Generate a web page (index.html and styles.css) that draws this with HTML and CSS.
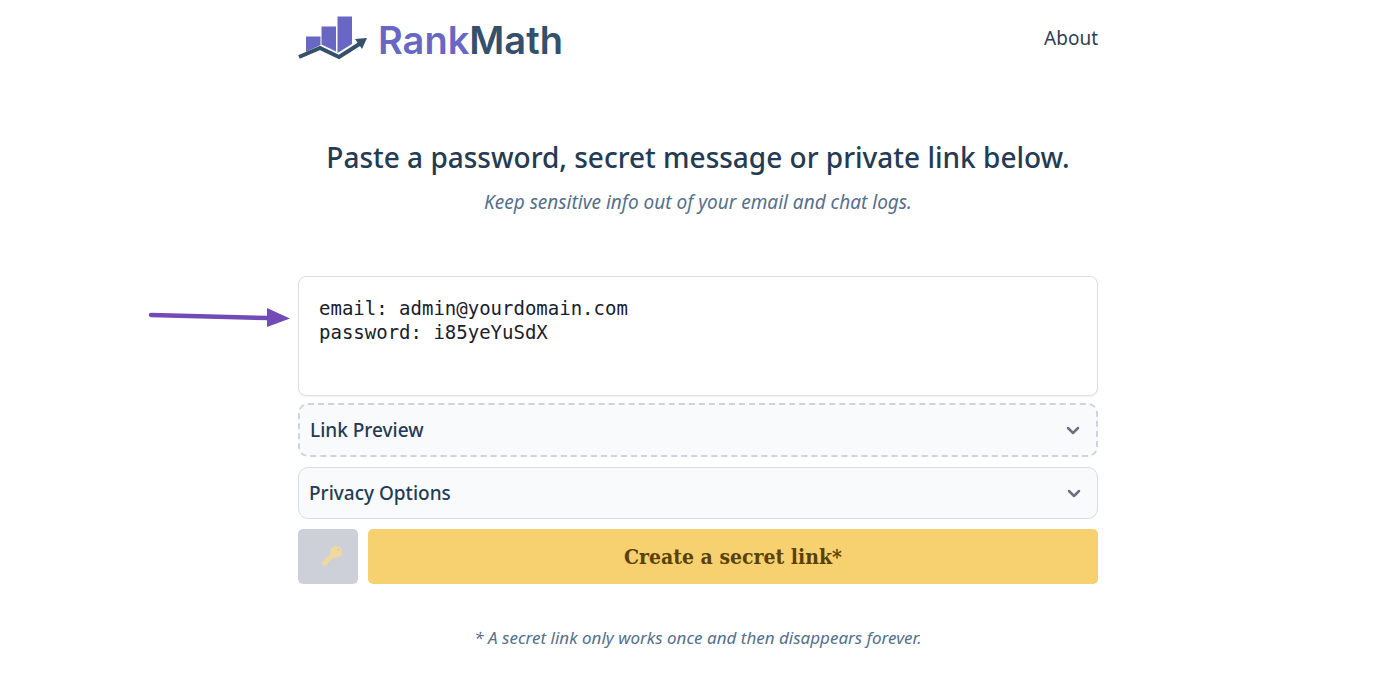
FILE: index.html
```html
<!DOCTYPE html>
<html lang="en">
<head>
    <meta charset="UTF-8">
    <meta name="viewport" content="width=device-width, initial-scale=1.0">
    <title>RankMath - Share a secret link</title>
    <link rel="stylesheet" href="styles.css">
</head>
<body>
    <div class="container">
        <!-- Header -->
        <header class="header">
            <a class="logo" href="#">
                <svg class="logo-mark" viewBox="0 0 70 44" aria-hidden="true">
                    <path fill="#6868c4" d="M8 20.500h14.500v8.500L8 36zM23.500 10.500h14.500v25L23.500 28.500zM39.500 .5h14.500v27.500L39.500 37z"/>
                    <path fill="none" stroke="#35506a" stroke-width="4" d="M1 41 22 32 41 41 63 27"/>
                    <path fill="#35506a" d="M57 23 69 22 64 33z"/>
                </svg>
                <span class="logo-text">Rank<span class="logo-dark">Math</span></span>
            </a>
            <nav>
                <a class="nav-link" href="#">About</a>
            </nav>
        </header>

        <main>
            <h1>Paste a password, secret message or private link below.</h1>
            <p class="subtitle">Keep sensitive info out of your email and chat logs.</p>

            <!-- Secret Form -->
            <form class="secret-form">
                <div class="secret-box">
                    <textarea id="secret" aria-label="Secret message" spellcheck="false">email: admin@yourdomain.com
password: i85yeYuSdX</textarea>
                    <svg class="arrow" viewBox="0 0 142 20" aria-hidden="true">
                        <path fill="none" stroke="#724bb7" stroke-width="4.5" stroke-linecap="round" d="M3 7 120 10"/>
                        <path fill="#724bb7" d="M119 0 142 10.500 119 19z"/>
                    </svg>
                </div>

                <details class="panel panel-dashed">
                    <summary>Link Preview
                        <svg class="chevron" viewBox="0 0 14 10" aria-hidden="true"><path d="M2 3l5 5 5-5"/></svg>
                    </summary>
                </details>

                <details class="panel">
                    <summary>Privacy Options
                        <svg class="chevron" viewBox="0 0 14 10" aria-hidden="true"><path d="M2 3l5 5 5-5"/></svg>
                    </summary>
                </details>

                <div class="actions">
                    <button type="button" class="key-button" aria-label="Encrypt with a password">
                        <svg class="key" viewBox="0 0 20 20" aria-hidden="true">
                            <path fill="#f1d99c" fill-rule="evenodd" d="M14.500 0a5.500 5.500 0 0 1 0 11.500q-1.500 0-2.500-.3L10.500 13l-1.500.8-4.500 4.800a2 2 0 0 1-4-2.800L8.500 8.500Q8 7.500 8 6a6 6 0 0 1 6.500-6zM16.300 2.200a1.300 1.300 0 1 0 0 2.600 1.300 1.300 0 0 0 0-2.600z"/>
                        </svg>
                    </button>
                    <button type="submit" class="create-button">Create a secret link*</button>
                </div>
            </form>
        </main>

        <footer class="footer">
            <p>* A secret link only works once and then disappears forever.</p>
        </footer>
    </div>
</body>
</html>
```
FILE: styles.css
```css
* {
    box-sizing: border-box;
}

body {
    margin: 0;
    padding: 0 20px 0 16px;
    background-color: #fff;
    font-family: "Noto Sans", "Open Sans", sans-serif;
    color: #243b53;
}

.container {
    max-width: 800px;
    margin: 0 auto;
}

/* Header */
.header {
    display: flex;
    justify-content: space-between;
    align-items: center;
    height: 76px;
}

.logo {
    display: flex;
    align-items: center;
    gap: 10px;
    text-decoration: none;
}

.logo-mark {
    width: 70px;
    height: 44px;
}

.logo-text {
    padding-top: 4px;
    font-family: Inter, sans-serif;
    font-size: 38px;
    font-weight: 600;
    line-height: 44px;
    color: #6868c4;
}

.logo-dark {
    color: #35506a;
}

.nav-link {
    font-size: 19px;
    color: #32404e;
    text-decoration: none;
}

/* Headings */
h1 {
    margin: 61px 0 0;
    font-size: 28px;
    font-weight: 550;
    line-height: 40px;
    text-align: center;
}

.subtitle {
    margin: 11px 0 60px;
    font-size: 19px;
    font-style: italic;
    line-height: 28px;
    text-align: center;
    color: #54708c;
}

/* Secret form */
.secret-box {
    position: relative;
}

textarea {
    display: block;
    width: 100%;
    height: 120px;
    padding: 19px 20px;
    border: 1px solid #dcdfe4;
    border-radius: 8px;
    box-shadow: 0 1px 2px rgba(0, 0, 0, 0.06);
    font-family: "DejaVu Sans Mono", monospace;
    font-size: 19px;
    line-height: 24px;
    color: #1a202c;
    resize: none;
    outline: none;
}

.arrow {
    position: absolute;
    top: 32px;
    right: 100%;
    width: 142px;
    height: 20px;
    margin-right: 8px;
}

.panel {
    margin-top: 10px;
    border: 1px solid #d9dce2;
    border-radius: 10px;
    background-color: #f9fafc;
}

.panel-dashed {
    margin-top: 7px;
    border: 2px dashed #d0d4da;
}

summary {
    display: flex;
    justify-content: space-between;
    align-items: center;
    padding: 11px 16px 11px 10px;
    font-size: 19px;
    font-weight: 550;
    line-height: 28px;
    list-style: none;
    cursor: pointer;
}

.chevron {
    width: 14px;
    height: 10px;
    fill: none;
    stroke: #6b7280;
    stroke-width: 2.5;
    stroke-linecap: round;
    stroke-linejoin: round;
}

/* Buttons */
.actions {
    display: flex;
    gap: 10px;
    margin-top: 10px;
}

button {
    height: 55px;
    padding: 0;
    border: none;
    border-radius: 5px;
    cursor: pointer;
}

.key-button {
    width: 60px;
    padding: 0 0 2px 8px;
    background-color: #cdd0d8;
}

.key {
    display: block;
    width: 20px;
    height: 20px;
    margin: 0 auto;
}

.create-button {
    flex: 1;
    background-color: #f7d170;
    font-family: "DejaVu Serif Condensed", "DejaVu Serif", serif;
    font-size: 21px;
    font-weight: bold;
    color: #5a4206;
}

/* Footer */
.footer p {
    margin: 40px 0 0;
    font-size: 17px;
    font-style: italic;
    line-height: 28px;
    text-align: center;
    color: #54708c;
}
```
